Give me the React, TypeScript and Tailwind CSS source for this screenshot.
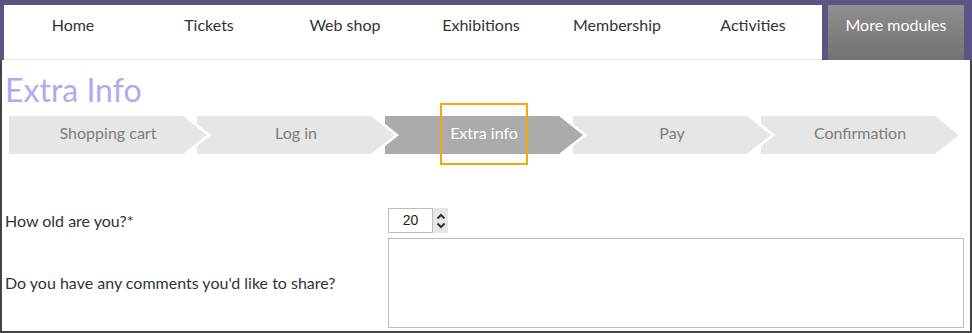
import { useState } from "react";

const NAV_ITEMS = ["Home", "Tickets", "Web shop", "Exhibitions", "Membership", "Activities"];

// earlier steps sit on top so their arrow overlaps the next one
const STEPS = [
  { label: "Shopping cart", z: "z-[5]" },
  { label: "Log in", z: "z-[4]" },
  { label: "Extra info", z: "z-[3]" },
  { label: "Pay", z: "z-[2]" },
  { label: "Confirmation", z: "z-[1]" },
];
const ACTIVE_STEP = 2;

const Step = ({ label, z, active }: { label: string; z: string; active: boolean }) => (
  <div className={`relative -mr-[14px] h-[38px] w-[202px] flex-none ${z}`}>
    <svg className="absolute inset-0 overflow-visible" width="202" height="38">
      <polygon points="0,0 178,0 202,19 178,38 0,38" fill="#ffffff" />
      <polygon points="0,0 174,0 198,19 174,38 0,38" fill={active ? "#ababab" : "#e6e6e6"} />
    </svg>
    <span
      className={`relative flex h-full w-[198px] items-center justify-center pb-[4px] text-[16px] ${
        active ? "text-white" : "text-[#7d7d7d]"
      }`}
    >
      {label}
    </span>
    {active && <div className="absolute left-[55px] top-[-13px] h-[62px] w-[88px] border-2 border-[#f3a90a]" />}
  </div>
);

const Spinner = () => (
  <div className="flex w-[15px] flex-col items-center justify-center gap-[2px] bg-[#e6e6e6]">
    <svg width="10" height="7" viewBox="0 0 10 7">
      <polyline points="1.5,5.5 5,2 8.5,5.5" fill="none" stroke="#333" strokeWidth="2" />
    </svg>
    <svg width="10" height="7" viewBox="0 0 10 7">
      <polyline points="1.5,1.5 5,5 8.5,1.5" fill="none" stroke="#333" strokeWidth="2" />
    </svg>
  </div>
);

export default function App() {
  const [age, setAge] = useState("20");
  const [comment, setComment] = useState("");

  return (
    <div className="flex h-[333px] w-[972px] flex-col bg-white font-['Lato','Liberation_Sans',sans-serif] text-[#333]">
      <nav className="flex h-[60px] flex-none bg-[#5c5484] pl-[4px] pr-[8px] pt-[5px]">
        <ul className="flex w-[818px] border-b border-[#e4e4e4] bg-white pl-[1px]">
          {NAV_ITEMS.map((item) => (
            <li key={item} className="w-[136px] pt-[9px] text-center text-[16px] leading-[22px]">
              {item}
            </li>
          ))}
        </ul>
        <div className="ml-[6px] w-[136px] bg-linear-to-b from-[#8f8f8f] to-[#727272] pt-[9px] text-center text-[16px] leading-[22px] text-white">
          More modules
        </div>
      </nav>

      <main className="flex flex-1 flex-col border-x-2 border-b-2 border-[#444]">
        <h1 className="mt-[14px] pl-[3px] text-[32px] leading-[32px] text-[#b4a9f0]">Extra Info</h1>

        <div className="ml-[7px] mt-[10px] flex">
          {STEPS.map((s, i) => (
            <Step key={s.label} label={s.label} z={s.z} active={i === ACTIVE_STEP} />
          ))}
        </div>

        <div className="mt-[54px] grid grid-cols-[386px_576px] gap-y-[5px] text-[16px]">
          <label className="flex items-center pl-[3px]">How old are you?*</label>
          <div className="flex h-[25px]">
            <input
              value={age}
              onChange={(e) => setAge(e.target.value)}
              className="w-[45px] border border-[#bcbcbc] pb-[1px] text-center font-['Liberation_Sans',sans-serif] text-[14px] text-[#222] outline-none"
            />
            <Spinner />
          </div>

          <label className="flex items-center pl-[3px]">Do you have any comments you'd like to share?</label>
          <textarea
            value={comment}
            onChange={(e) => setComment(e.target.value)}
            className="h-[90px] w-[576px] resize-none border border-[#bcbcbc] outline-none"
          />
        </div>
      </main>
    </div>
  );
}
